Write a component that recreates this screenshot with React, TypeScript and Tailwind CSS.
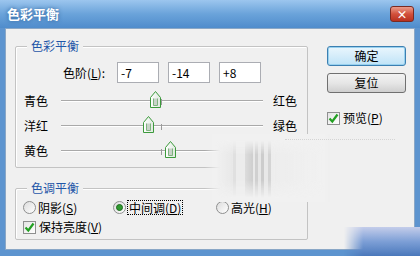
import React from "react";

const font = { fontFamily: '"Noto Sans CJK SC", "Liberation Sans", sans-serif' };

function Thumb() {
  return (
    <svg width="13" height="19" viewBox="0 0 13 19">
      <defs>
        <linearGradient id="tg" x1="0" y1="0" x2="1" y2="0">
          <stop offset="0" stopColor="#ffffff" />
          <stop offset="1" stopColor="#dfe9df" />
        </linearGradient>
      </defs>
      <path d="M1.5 7.5 L6.5 1.5 L11.5 7.5 V17.5 H1.5 Z" fill="url(#tg)" stroke="#3c9a3c" strokeWidth="1" />
      <path d="M4.5 8.5 V15.5 H8.5 V8.5" fill="#c9d3c9" stroke="#7fb37f" strokeWidth="1" />
    </svg>
  );
}

function Slider({ left, right, value }: { left: string; right: string; value: number }) {
  const x = 101 + (value / 100) * 101;
  return (
    <div className="flex items-center h-[25px] pl-[8px]">
      <span className="w-[24px]">{left}</span>
      <div className="relative ml-[13px] w-[202px] h-[2px] border-t border-[#a9a9a9] border-b border-b-white">
        <div className="absolute left-[100px] top-[-2px] w-px h-[6px] bg-[#9a9a9a]" />
        <div className="absolute top-[-11px]" style={{ left: x - 6 }}>
          <Thumb />
        </div>
      </div>
      <span className="ml-[10px]">{right}</span>
    </div>
  );
}

function Check({ label, u }: { label: string; u: string }) {
  return (
    <div className="flex items-center gap-[3px]">
      <span className="w-[13px] h-[13px] border border-[#8e8f8f] bg-gradient-to-br from-[#e4e4e4] to-white flex items-center justify-center">
        <svg width="11" height="11" viewBox="0 0 11 11">
          <path d="M1.5 5.5 L4.3 8.5 L9.5 1.5" fill="none" stroke="#22a022" strokeWidth="2.2" />
        </svg>
      </span>
      <span>
        {label}(<span className="underline">{u}</span>)
      </span>
    </div>
  );
}

function Radio({ label, u, on, focus }: { label: string; u: string; on?: boolean; focus?: boolean }) {
  return (
    <div className="flex items-center gap-[2px]">
      <span className="w-[13px] h-[13px] rounded-full border border-[#8e8f8f] bg-gradient-to-br from-[#dcdcdc] to-white flex items-center justify-center">
        {on && <span className="w-[7px] h-[7px] rounded-full bg-[#2f9a2f] border border-[#1d6b1d]" />}
      </span>
      <span className={focus ? "outline outline-1 outline-dotted outline-black px-px leading-[13px]" : "leading-[13px]"}>
        {label}(<span className="underline">{u}</span>)
      </span>
    </div>
  );
}

function Group({ title, className, children }: { title: string; className: string; children: React.ReactNode }) {
  return (
    <div className={"relative border border-[#c3c3c3] rounded-[2px] shadow-[inset_1px_1px_0_#ffffff] " + className}>
      <span className="absolute left-[11px] top-[-9px] px-[4px] bg-[#f0f0f0] text-[#1f56a8] leading-[16px]">{title}</span>
      {children}
    </div>
  );
}

export default function App() {
  return (
    <div className="relative w-[420px] h-[256px] overflow-hidden flex flex-col bg-[#5d94cf] text-[12px] text-black" style={font}>
      <div className="h-[28px] flex items-center justify-between pl-[7px] pr-[6px] bg-gradient-to-b from-[#9cc6ee] via-[#6aa3da] to-[#4f8ccc]">
        <span className="text-white text-[13px] font-bold [text-shadow:0_0_4px_#2c5f99]">色彩平衡</span>
        <span className="w-[24px] h-[16px] rounded-[3px] border border-[#7a2a22] bg-gradient-to-b from-[#e99b8b] via-[#d2503c] to-[#b8301f] flex items-center justify-center text-white text-[11px] font-bold leading-none">
          ×
        </span>
      </div>
      <div className="flex-1 mx-[5px] mb-[6px] bg-[#f0f0f0] border border-[#8aa7c6] flex pl-[9px] pt-[17px]">
        <div className="flex flex-col w-[293px]">
          <Group title="色彩平衡" className="h-[122px]">
            <div className="flex items-center h-[21px] mt-[15px] pl-[47px]">
              <span className="w-[54px]">
                色阶(<span className="underline">L</span>):
              </span>
              <div className="flex gap-[9px]">
                {["-7", "-14", "+8"].map((v) => (
                  <div key={v} className="w-[42px] h-[21px] border border-[#abadb3] bg-white px-[3px] flex items-center">
                    {v}
                  </div>
                ))}
              </div>
            </div>
            <div className="mt-[5px]">
              <Slider left="青色" right="红色" value={-7} />
              <Slider left="洋红" right="绿色" value={-14} />
              <Slider left="黄色" right="蓝色" value={8} />
            </div>
          </Group>
          <Group title="色调平衡" className="h-[52px] mt-[20px]">
            <div className="flex flex-col gap-[4px] pl-[7px] pt-[12px]">
              <div className="flex">
                <div className="w-[90px]">
                  <Radio label="阴影" u="S" />
                </div>
                <div className="w-[103px]">
                  <Radio label="中间调" u="D" on focus />
                </div>
                <Radio label="高光" u="H" />
              </div>
              <Check label="保持亮度" u="V" />
            </div>
          </Group>
        </div>
        <div className="flex flex-col ml-[19px] w-[79px]">
          <button className="h-[20px] rounded-[3px] border border-[#3c7fb1] bg-gradient-to-b from-[#eaf6fd] to-[#bfe3f7] shadow-[inset_0_0_0_1px_#98d1ef]">确定</button>
          <button className="h-[20px] mt-[7px] rounded-[3px] border border-[#707070] bg-gradient-to-b from-[#f2f2f2] via-[#e6e6e6] to-[#cfcfcf]">复位</button>
          <div className="mt-[16px]">
            <Check label="预览" u="P" />
          </div>
        </div>
      </div>
      {/* watermark wash over the middle */}
      <div className="absolute left-[205px] top-[134px] w-[125px] h-[68px] pointer-events-none bg-[#f1f1f1] [mask-image:linear-gradient(to_right,transparent,black_12%,black_90%,transparent)]" />
      <div className="absolute left-[215px] top-[140px] w-[110px] h-[58px] pointer-events-none flex opacity-80 [mask-image:linear-gradient(to_bottom,transparent,black_25%,black_70%,transparent)]">
        <div className="w-[18px] bg-gradient-to-r from-transparent to-[#e6e6e6]" />
        <div className="w-[3px] bg-[#dcdcdc]" />
        <div className="w-[9px] bg-[#ececec]" />
        <div className="w-[8px] bg-gradient-to-r from-[#d8d8d8] to-[#c6c6c6]" />
        <div className="w-[2px] bg-[#e6e6e6]" />
        <div className="w-[3px] bg-[#c8c8c8]" />
        <div className="w-[3px] bg-[#e4e4e4]" />
        <div className="w-[3px] bg-[#c4c4c4]" />
        <div className="w-[4px] bg-[#e6e6e6]" />
        <div className="w-[3px] bg-[#cdcdcd]" />
        <div className="flex-1 bg-gradient-to-r from-[#ececec] to-transparent" />
      </div>
      <div className="absolute left-[285px] top-[139px] w-[110px] h-px pointer-events-none border-t border-dotted border-[#d4d4d4]" />
      <div className="absolute right-0 bottom-0 w-[76px] h-[29px] pointer-events-none bg-gradient-to-b from-[#c4cdea] via-[#7d9fd6] to-[#4a78bb] [mask-image:linear-gradient(to_right,transparent,black_25%)]" />
    </div>
  );
}
